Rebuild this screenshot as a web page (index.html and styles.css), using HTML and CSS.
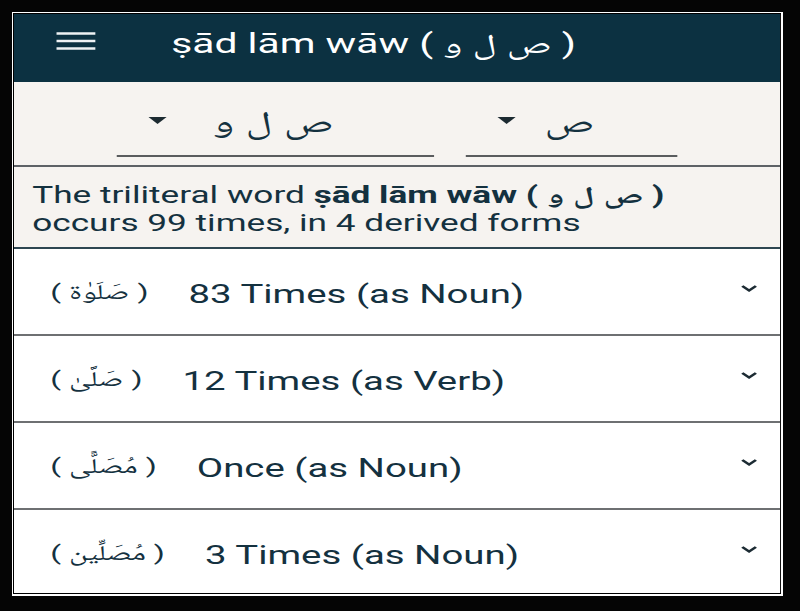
FILE: index.html
```html
<!DOCTYPE html>
<html lang="en">
<head>
    <meta charset="UTF-8">
    <meta name="viewport" content="width=device-width, initial-scale=1.0">
    <title>ṣād lām wāw</title>
    <link rel="stylesheet" href="styles.css">
</head>
<body>
    <div class="frame">
        <div class="app">
            <header class="topbar">
                <svg class="menu-icon" width="26" height="18" viewBox="0 0 26 18">
                    <path d="M0 1.5h26M0 9h26M0 16.5h26" stroke="#eef2f4" stroke-width="2.6"/>
                </svg>
                <h1 class="title">ṣād lām wāw ( ص ل و )</h1>
            </header>

            <div class="filters">
                <div class="select select-wide">
                    <span class="caret"></span>
                    <span class="select-value">ص ل و</span>
                </div>
                <div class="select select-narrow">
                    <span class="caret"></span>
                    <span class="select-value">ص</span>
                </div>
            </div>

            <p class="summary">The triliteral word <b>ṣād lām wāw ( ص ل و )</b><br>occurs 99 times, in 4 derived forms</p>

            <ul class="forms">
                <li class="form-row">
                    <span class="arabic">( صَلَوٰة )</span>
                    <span class="form-count">83 Times (as Noun)</span>
                    <svg class="chevron" width="11" height="7" viewBox="0 0 11 7"><path d="M1 1l4.5 4.5L10 1" fill="none" stroke="#1c2b33" stroke-width="2"/></svg>
                </li>
                <li class="form-row">
                    <span class="arabic">( صَلَّىٰ )</span>
                    <span class="form-count">12 Times (as Verb)</span>
                    <svg class="chevron" width="11" height="7" viewBox="0 0 11 7"><path d="M1 1l4.5 4.5L10 1" fill="none" stroke="#1c2b33" stroke-width="2"/></svg>
                </li>
                <li class="form-row">
                    <span class="arabic">( مُصَلًّى )</span>
                    <span class="form-count">Once (as Noun)</span>
                    <svg class="chevron" width="11" height="7" viewBox="0 0 11 7"><path d="M1 1l4.5 4.5L10 1" fill="none" stroke="#1c2b33" stroke-width="2"/></svg>
                </li>
                <li class="form-row">
                    <span class="arabic">( مُصَلِّين )</span>
                    <span class="form-count">3 Times (as Noun)</span>
                    <svg class="chevron" width="11" height="7" viewBox="0 0 11 7"><path d="M1 1l4.5 4.5L10 1" fill="none" stroke="#1c2b33" stroke-width="2"/></svg>
                </li>
            </ul>
        </div>
    </div>
</body>
</html>
```

FILE: styles.css
```css
body {
    margin: 0;
    padding: 12px;
    background-color: #050505;
    font-family: Roboto, "Noto Naskh Arabic", "DejaVu Sans", sans-serif;
    color: #14313f;
}

/* white outline round the phone capture */
.frame {
    width: 766px;
    height: 579px;
    padding: 1px;
    background-color: #000;
    border: 1px solid #fff;
    border-right-width: 2px;
    border-bottom-width: 2px;
    overflow: hidden;
}

/* the capture is stretched sideways, so the app is laid out narrow and widened */
.app {
    width: 507px;
    height: 579px;
    overflow: hidden;
    background-color: #fff;
    transform: scaleX(1.511);
    transform-origin: 0 0;
}

.topbar {
    display: flex;
    align-items: flex-start;
    height: 68px;
    padding: 14px 0 0 28px;
    box-sizing: border-box;
    background-color: #0c3141;
}

.menu-icon {
    margin-top: 3.5px;
    flex: 0 0 auto;
}

.title {
    margin: 0 0 0 50px;
    font-size: 27px;
    font-weight: 400;
    line-height: 32px;
    color: #fff;
    white-space: nowrap;
}

.filters {
    display: flex;
    justify-content: center;
    gap: 21px;
    height: 85px;
    padding-top: 13px;
    box-sizing: border-box;
    background-color: #f6f3f0;
    border-bottom: 2px solid #5e6266;
}

.select {
    display: flex;
    align-items: center;
    height: 60px;
    border-bottom: 2px solid #5a5c5e;
}

.select-wide {
    width: 210px;
}

.select-narrow {
    width: 140px;
}

.caret {
    flex: 0 0 auto;
    width: 0;
    height: 0;
    margin: -10px 0 0 21px;
    border-left: 6.5px solid transparent;
    border-right: 6.5px solid transparent;
    border-top: 7px solid #1c2a31;
}

.select-value {
    flex: 1;
    padding-right: 36px;
    text-align: center;
    font-size: 30px;
}

.summary {
    margin: 0;
    height: 82px;
    padding: 15px 12px 0;
    box-sizing: border-box;
    font-size: 23.3px;
    line-height: 27.5px;
    background-color: #f6f3f0;
    border-bottom: 2px solid #2e4651;
    white-space: nowrap;
}

.forms {
    list-style: none;
    margin: 0;
    padding: 0;
}

.form-row {
    display: flex;
    align-items: center;
    height: 87px;
    padding: 5px 15px 0 24px;
    box-sizing: border-box;
    border-bottom: 2px solid #6e7072;
    background-color: #fff;
}

.arabic {
    margin-right: 26.5px;
    font-size: 21px;
    white-space: nowrap;
}

.form-count {
    flex: 1;
    font-size: 25.4px;
    white-space: nowrap;
}

.chevron {
    flex: 0 0 auto;
    margin-top: -11px;
}
```
